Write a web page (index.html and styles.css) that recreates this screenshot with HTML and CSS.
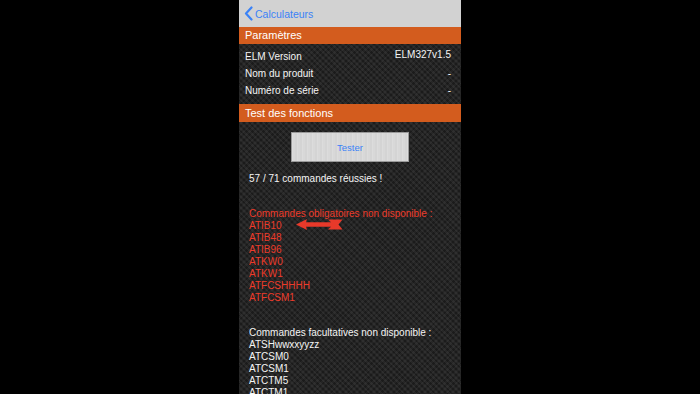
FILE: index.html
```html
<!DOCTYPE html>
<html lang="fr">
<head>
    <meta charset="UTF-8">
    <meta name="viewport" content="width=device-width, initial-scale=1.0">
    <title>Calculateurs</title>
    <link rel="stylesheet" href="styles.css">
</head>
<body>
    <div class="phone">
        <div class="navbar">
            <svg class="chevron" width="9" height="15" viewBox="0 0 9 15">
                <path d="M7.5 1.5 L2 7.5 L7.5 13.5" fill="none" stroke="#3a82f7" stroke-width="2.2" stroke-linecap="round" stroke-linejoin="round"/>
            </svg>
            <span class="back">Calculateurs</span>
        </div>

        <div class="section-title">Paramètres</div>
        <div class="rows">
            <div class="row"><span>ELM Version</span><span class="value up">ELM327v1.5</span></div>
            <div class="row"><span>Nom du produit</span><span class="value">-</span></div>
            <div class="row"><span>Numéro de série</span><span class="value">-</span></div>
        </div>

        <div class="section-title tall">Test des fonctions</div>
        <div class="content">
            <button type="button" class="tester">Tester</button>
            <p class="result">57 / 71 commandes réussies !</p>

            <div class="list missing">
                <div>Commandes obligatoires non disponible :</div>
                <div class="with-arrow">ATIB10
                    <svg class="arrow" width="47" height="11" viewBox="0 0 47 11">
                        <path d="M0 5.5 L11 0 L10 3.2 L35 3.2 L32 0.5 L46.5 0.5 L42.5 5.5 L46.5 10.5 L32 10.5 L35 7.8 L10 7.8 L11 11 Z" fill="#e8392a"/>
                    </svg>
                </div>
                <div>ATIB48</div>
                <div>ATIB96</div>
                <div>ATKW0</div>
                <div>ATKW1</div>
                <div>ATFCSHHHH</div>
                <div>ATFCSM1</div>
            </div>

            <div class="list optional">
                <div>Commandes facultatives non disponible :</div>
                <div>ATSHwwxxyyzz</div>
                <div>ATCSM0</div>
                <div>ATCSM1</div>
                <div>ATCTM5</div>
                <div>ATCTM1</div>
            </div>
        </div>
    </div>
</body>
</html>
```

FILE: styles.css
```css
html, body {
    margin: 0;
    padding: 0;
    background: #000;
}
body {
    font-family: "Liberation Sans", Arial, sans-serif;
    display: flex;
    justify-content: center;
    height: 394px;
    overflow: hidden;
}
.phone {
    width: 222px;
    height: 394px;
    overflow: hidden;
    background-color: #242424;
    background-image:
        repeating-linear-gradient(45deg, rgba(255,255,255,0.05) 0 2px, transparent 2px 4px),
        repeating-linear-gradient(-45deg, rgba(0,0,0,0.25) 0 2px, transparent 2px 4px);
    color: #f4f4f4;
}
.navbar {
    height: 27px;
    background: #d2d2d2;
    display: flex;
    align-items: center;
    padding-left: 5px;
    box-sizing: border-box;
}
.chevron {
    margin-right: 2px;
}
.back {
    color: #3a82f7;
    font-size: 10.5px;
}
.section-title {
    background: #d35c1e;
    color: #fff;
    font-size: 11px;
    height: 17px;
    line-height: 17px;
    padding-left: 6px;
}
.section-title.tall {
    height: 18px;
    line-height: 18px;
}
.rows {
    padding: 4px 10px 5px 6px;
}
.row {
    display: flex;
    justify-content: space-between;
    height: 17px;
    line-height: 17px;
    font-size: 10px;
}
.value.up {
    position: relative;
    top: -2px;
}
.content {
    padding: 10px 10px 0 10px;
}
.tester {
    display: block;
    margin: 0 auto;
    width: 118px;
    height: 30px;
    border: 1px solid #9a9a9a;
    background-color: #d8d8d8;
    background-image: repeating-linear-gradient(90deg, rgba(255,255,255,0.1) 0 1px, transparent 1px 3px, rgba(0,0,0,0.02) 3px 5px);
    color: #3a82f7;
    font-family: "Liberation Sans", Arial, sans-serif;
    font-size: 9.5px;
    padding: 0;
}
.result {
    margin: 11px 0 0 0;
    font-size: 10px;
    line-height: 12px;
}
.list {
    font-size: 10px;
    line-height: 12px;
}
.missing {
    color: #ec3b2a;
    margin-top: 23px;
}
.optional {
    color: #f4f4f4;
    margin-top: 23px;
}
.with-arrow {
    position: relative;
}
.arrow {
    position: absolute;
    left: 47px;
    top: -1px;
}
```
